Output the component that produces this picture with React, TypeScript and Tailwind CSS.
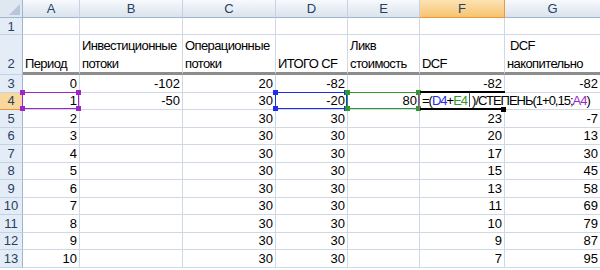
import React from 'react'

const cols = ['A', 'B', 'C', 'D', 'E', 'F', 'G']

type Cell = string | string[]

// rows 3..13
const data: Cell[][] = [
  ['0', '-102', '20', '-82', '', '-82', '-82'],
  ['1', '-50', '30', '-20', '80', '', ''],
  ['2', '', '30', '30', '', '23', '-7'],
  ['3', '', '30', '30', '', '20', '13'],
  ['4', '', '30', '30', '', '17', '30'],
  ['5', '', '30', '30', '', '15', '45'],
  ['6', '', '30', '30', '', '13', '58'],
  ['7', '', '30', '30', '', '11', '69'],
  ['8', '', '30', '30', '', '10', '79'],
  ['9', '', '30', '30', '', '9', '87'],
  ['10', '', '30', '30', '', '7', '95'],
]

const titles: string[][] = [
  ['Период'],
  ['Инвестиционные', 'потоки'],
  ['Операционные', 'потоки'],
  ['ИТОГО CF'],
  ['Ликв', 'стоимость'],
  ['DCF'],
  ['\u00a0DCF', 'накопительно'],
]

function RefBox({ color }: { color: string }) {
  const sq = 'absolute w-[5px] h-[5px]'
  return (
    <div className="absolute -top-px -left-px -right-0 -bottom-0 border pointer-events-none z-10" style={{ borderColor: color }}>
      <div className={`${sq} -top-[3px] -left-[3px]`} style={{ background: color }} />
      <div className={`${sq} -top-[3px] -right-[3px]`} style={{ background: color }} />
      <div className={`${sq} -bottom-[3px] -left-[3px]`} style={{ background: color }} />
      <div className={`${sq} -bottom-[3px] -right-[3px]`} style={{ background: color }} />
    </div>
  )
}

export default function App() {
  const gridLine = 'border-r border-b border-[#d0d7e5]'
  return (
    <div className="w-[600px] h-[270px] overflow-hidden bg-white font-['Liberation_Sans',Arial,sans-serif] text-[13px] text-black leading-none">
      <div className="grid grid-cols-[23px_57px_103px_93px_72px_72px_85px_96px] grid-rows-[18px_17px_40px_repeat(11,17.5px)]">
        {/* шапка столбцов */}
        <div className="relative bg-[#dfe7f1] border-r border-b border-[#9eb6ce]">
          <div className="absolute right-[2px] bottom-[2px] w-0 h-0 border-l-[11px] border-l-transparent border-b-[11px] border-b-[#b7c6d9]" />
        </div>
        {cols.map((c) => (
          <div
            key={c}
            className={
              c === 'F'
                ? 'flex items-center justify-center bg-gradient-to-b from-[#fbe2b3] to-[#f6c46e] border-r border-b border-[#f29536] text-[#27415f]'
                : 'flex items-center justify-center bg-gradient-to-b from-[#f7f9fc] to-[#dae3ee] border-r border-b border-r-[#c5d2e2] border-b-[#9eb6ce] text-[#27415f]'
            }
          >
            {c}
          </div>
        ))}

        {/* строка 1 */}
        <div className="flex items-center justify-center bg-[#e4ecf7] border-r border-b border-r-[#9eb6ce] border-b-[#c5d2e2] text-[#27415f]">1</div>
        {cols.map((c) => (
          <div key={'r1' + c} className={gridLine} />
        ))}

        {/* строка 2 — заголовки */}
        <div className="flex items-end justify-center pb-[4px] bg-[#e4ecf7] border-r border-b border-r-[#9eb6ce] border-b-[#c5d2e2] text-[#27415f]">2</div>
        {titles.map((t, i) => (
          <div
            key={'r2' + i}
            className="flex flex-col justify-end gap-[5px] pb-[2px] pl-[2px] overflow-hidden whitespace-nowrap tracking-[-0.6px] border-r border-r-[#d0d7e5] border-b-[3px] border-b-[#8c8c8c]"
          >
            {t.map((line) => (
              <span key={line}>{line}</span>
            ))}
          </div>
        ))}

        {/* строки 3..13 */}
        {data.map((row, ri) => {
          const n = ri + 3
          const active = n === 4
          return (
            <React.Fragment key={n}>
              <div
                className={
                  active
                    ? 'flex items-center justify-center bg-[#f9d89d] border-r border-b border-[#f29536] text-[#27415f]'
                    : 'flex items-center justify-center bg-[#e4ecf7] border-r border-b border-r-[#9eb6ce] border-b-[#c5d2e2] text-[#27415f]'
                }
              >
                {n}
              </div>
              {row.map((v, ci) => {
                const col = cols[ci]
                return (
                  <div key={col + n} className={`relative flex items-end justify-end pr-[2px] pb-[2px] ${gridLine} ${active && col === 'F' ? 'border-r-white' : ''}`}>
                    {v}
                    {active && col === 'A' && <RefBox color="#9c27c8" />}
                    {active && col === 'D' && <RefBox color="#1f2ee8" />}
                    {active && col === 'E' && <RefBox color="#2e9a2e" />}
                    {active && col === 'F' && (
                      <>
                        <div className="absolute -top-[2px] left-0 w-[85px] h-[2px] bg-black z-20" />
                        <div className="absolute -bottom-[1px] left-0 w-[85px] h-[2px] bg-black z-20" />
                        <div className="absolute -left-px top-0 bottom-0 w-px bg-[#e040c0] z-20" />
                        <div className="absolute -bottom-[3px] right-[-2px] w-[5px] h-[5px] bg-black z-20" />
                        <div className="absolute top-0 bottom-0 left-[1px] w-[178px] bg-white flex items-end pb-[2px] pl-[1px] whitespace-nowrap z-10 tracking-[-1px]">
                          <span>=(</span>
                          <span className="text-[#1f2ee8]">D4</span>
                          <span>+</span>
                          <span className="text-[#2e9a2e]">E4</span>
                          <span className="inline-block w-px h-[15px] bg-[#555] mx-[2px]" />
                          <span>)/СТЕПЕНЬ(1+0,15;</span>
                          <span className="text-[#9c27c8]">A4</span>
                          <span>)</span>
                        </div>
                      </>
                    )}
                  </div>
                )
              })}
            </React.Fragment>
          )
        })}
      </div>
    </div>
  )
}
